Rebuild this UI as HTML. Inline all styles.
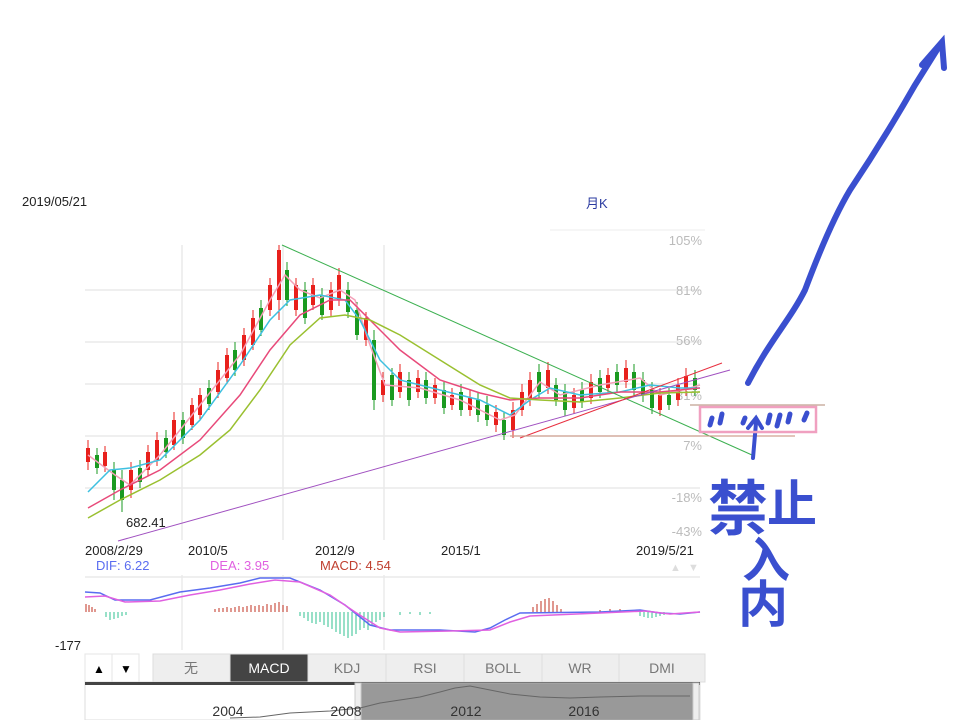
<!DOCTYPE html>
<html><head><meta charset="utf-8"><style>
body{margin:0;background:#fff;width:953px;height:720px;overflow:hidden;font-family:"Liberation Sans","Noto Sans CJK SC",sans-serif;}
svg{position:absolute;left:0;top:0}
</style></head><body>
<svg width="953" height="720" viewBox="0 0 953 720" xmlns="http://www.w3.org/2000/svg" font-family="Liberation Sans, Noto Sans CJK SC, sans-serif">
<text x="22" y="206" font-size="13" fill="#222">2019/05/21</text>
<text x="586" y="208" font-size="13" fill="#2a3aa0">月K</text>
<line x1="550" y1="230" x2="705" y2="230" stroke="#eee"/>
<g stroke="#eaeaea" stroke-width="1.5">
<line x1="85" y1="290" x2="700" y2="290"/><line x1="85" y1="342" x2="700" y2="342"/>
<line x1="85" y1="384" x2="700" y2="384"/><line x1="85" y1="436" x2="700" y2="436"/>
<line x1="85" y1="488" x2="700" y2="488"/>
<line x1="182" y1="245" x2="182" y2="540"/><line x1="283" y1="245" x2="283" y2="540"/><line x1="384" y1="245" x2="384" y2="540"/>
<line x1="182" y1="575" x2="182" y2="650"/><line x1="283" y1="575" x2="283" y2="650"/><line x1="384" y1="575" x2="384" y2="650"/>
<line x1="85" y1="577" x2="700" y2="577"/>
</g>
<g font-size="13" fill="#bbb" text-anchor="end">
<text x="702" y="245">105%</text><text x="702" y="295">81%</text><text x="702" y="345">56%</text>
<text x="702" y="400">31%</text><text x="702" y="450">7%</text><text x="702" y="502">-18%</text><text x="702" y="536">-43%</text>
</g>
<!-- wicks -->
<path stroke="#e8201c" fill="none" d="M88,440V470M105,446V472M131,462V498M148,445V476M157,432V466M174,412V450M192,398V430M200,388V420M218,362V398M227,348V384M244,328V366M253,310V350M270,278V316M279,245V320M296,278V316M313,278V310M331,282V316M339,268V306M366,312V346M383,372V402M400,364V398M418,370V398M435,378V404M452,388V410M470,390V416M496,405V432M513,402V438M522,384V416M530,372V406M548,362V394M574,388V414M591,374V404M608,368V394M626,360V388M660,388V416M678,378V406M686,368V396"/>
<path stroke="#1a9a20" fill="none" d="M97,448V474M114,462V500M122,470V512M140,460V488M166,430V458M183,412V444M209,380V410M235,342V376M261,300V336M287,262V306M305,282V324M322,288V320M348,282V318M357,302V340M374,330V410M392,368V406M409,372V406M426,372V404M444,382V414M461,384V416M478,392V422M487,396V426M504,412V440M539,364V398M556,378V406M565,384V416M582,382V408M600,370V398M617,364V392M634,364V396M643,372V402M652,382V414M669,388V410M695,370V396"/>
<g fill="#e8201c">
<rect x="86" y="448" width="4" height="14"/><rect x="103" y="452" width="4" height="14"/><rect x="129" y="470" width="4" height="20"/><rect x="146" y="452" width="4" height="18"/><rect x="155" y="440" width="4" height="20"/><rect x="172" y="420" width="4" height="25"/><rect x="190" y="405" width="4" height="20"/><rect x="198" y="395" width="4" height="20"/><rect x="216" y="370" width="4" height="22"/><rect x="225" y="355" width="4" height="23"/><rect x="242" y="335" width="4" height="25"/><rect x="251" y="318" width="4" height="27"/><rect x="268" y="285" width="4" height="25"/><rect x="277" y="250" width="4" height="50"/><rect x="294" y="285" width="4" height="25"/><rect x="311" y="285" width="4" height="20"/><rect x="329" y="290" width="4" height="20"/><rect x="337" y="275" width="4" height="25"/><rect x="364" y="318" width="4" height="22"/><rect x="381" y="380" width="4" height="15"/><rect x="398" y="372" width="4" height="20"/><rect x="416" y="378" width="4" height="14"/><rect x="433" y="385" width="4" height="13"/><rect x="450" y="395" width="4" height="10"/><rect x="468" y="398" width="4" height="12"/><rect x="494" y="412" width="4" height="13"/><rect x="511" y="410" width="4" height="20"/><rect x="520" y="392" width="4" height="18"/><rect x="528" y="380" width="4" height="20"/><rect x="546" y="370" width="4" height="18"/><rect x="572" y="395" width="4" height="13"/><rect x="589" y="382" width="4" height="16"/><rect x="606" y="375" width="4" height="13"/><rect x="624" y="368" width="4" height="14"/><rect x="658" y="395" width="4" height="15"/><rect x="676" y="385" width="4" height="15"/><rect x="684" y="376" width="4" height="14"/>
</g>
<g fill="#1a9a20">
<rect x="95" y="455" width="4" height="13"/><rect x="112" y="470" width="4" height="20"/><rect x="120" y="480" width="4" height="20"/><rect x="138" y="468" width="4" height="14"/><rect x="164" y="438" width="4" height="14"/><rect x="181" y="420" width="4" height="18"/><rect x="207" y="388" width="4" height="16"/><rect x="233" y="350" width="4" height="20"/><rect x="259" y="308" width="4" height="22"/><rect x="285" y="270" width="4" height="30"/><rect x="303" y="290" width="4" height="28"/><rect x="320" y="295" width="4" height="20"/><rect x="346" y="290" width="4" height="22"/><rect x="355" y="310" width="4" height="25"/><rect x="372" y="340" width="4" height="60"/><rect x="390" y="375" width="4" height="25"/><rect x="407" y="380" width="4" height="20"/><rect x="424" y="380" width="4" height="18"/><rect x="442" y="390" width="4" height="18"/><rect x="459" y="392" width="4" height="18"/><rect x="476" y="400" width="4" height="15"/><rect x="485" y="405" width="4" height="15"/><rect x="502" y="420" width="4" height="15"/><rect x="537" y="372" width="4" height="20"/><rect x="554" y="385" width="4" height="15"/><rect x="563" y="392" width="4" height="18"/><rect x="580" y="390" width="4" height="12"/><rect x="598" y="378" width="4" height="14"/><rect x="615" y="372" width="4" height="13"/><rect x="632" y="372" width="4" height="18"/><rect x="641" y="380" width="4" height="15"/><rect x="650" y="390" width="4" height="18"/><rect x="667" y="395" width="4" height="10"/><rect x="693" y="378" width="4" height="12"/>
</g>
<g fill="none" stroke-width="1.5">
<polyline stroke="#f4a0b8" points="88,455 115,475 130,485 160,455 200,405 240,355 270,300 285,275 300,290 320,298 340,290 355,300 370,345 385,385 420,388 460,400 500,420 515,415 540,382 560,395 600,385 640,378 660,395 690,388 700,385"/>
<polyline stroke="#3ec0e0" points="88,492 110,470 130,468 160,460 200,420 240,365 270,320 290,300 320,295 345,300 360,320 380,360 400,380 440,390 480,400 510,415 530,400 550,388 580,395 620,392 650,385 680,388 700,388"/>
<polyline stroke="#e84a7a" points="88,508 120,490 160,470 200,440 240,395 270,350 300,315 330,300 350,300 370,320 400,350 440,380 480,393 510,400 540,398 580,398 620,392 660,392 700,388"/>
<polyline stroke="#9ac030" points="88,518 120,500 160,480 200,455 230,430 260,390 290,345 320,318 345,315 370,320 400,335 440,360 480,385 510,398 540,400 580,402 620,398 660,393 700,392"/>
</g>
<line x1="282" y1="245" x2="752" y2="455" stroke="#3cb050" stroke-width="1"/>
<line x1="118" y1="541" x2="730" y2="370" stroke="#a050c0" stroke-width="1"/>
<line x1="520" y1="438" x2="722" y2="363" stroke="#e83040" stroke-width="1"/>
<line x1="510" y1="436" x2="795" y2="436" stroke="#d0a090" stroke-width="1.2"/>
<line x1="690" y1="405" x2="825" y2="405" stroke="#c0a090" stroke-width="1.2"/>
<text x="126" y="527" font-size="13" fill="#222">682.41</text>
<g font-size="13" fill="#222">
<text x="85" y="555">2008/2/29</text><text x="188" y="555">2010/5</text><text x="315" y="555">2012/9</text>
<text x="441" y="555">2015/1</text><text x="636" y="555">2019/5/21</text>
</g>
<g font-size="13"><text x="96" y="570" fill="#5a6cf0">DIF: 6.22</text><text x="210" y="570" fill="#e060e0">DEA: 3.95</text><text x="320" y="570" fill="#c04030">MACD: 4.54</text></g>
<text x="670" y="571" font-size="11" fill="#ddd">▲</text><text x="688" y="571" font-size="11" fill="#ddd">▼</text>
<path stroke="#c03020" fill="none" d="M86,612v-8M89,612v-7M92,612v-5M95,612v-3M215,612v-3M219,612v-4M223,612v-4M227,612v-5M231,612v-4M235,612v-5M239,612v-6M243,612v-5M247,612v-6M251,612v-7M255,612v-6M259,612v-7M263,612v-6M267,612v-8M271,612v-7M275,612v-9M279,612v-10M283,612v-7M287,612v-6M533,612v-5M537,612v-8M541,612v-11M545,612v-13M549,612v-14M553,612v-11M557,612v-7M561,612v-3M600,612v-2M610,612v-3M620,612v-3"/>
<path stroke="#30c090" fill="none" d="M106,612v5M110,612v8M114,612v7M118,612v6M122,612v4M126,612v3M300,612v4M304,612v6M308,612v9M312,612v11M316,612v12M320,612v10M324,612v13M328,612v15M332,612v17M336,612v20M340,612v22M344,612v24M348,612v26M352,612v24M356,612v22M360,612v18M364,612v16M368,612v18M372,612v14M376,612v10M380,612v8M384,612v5M400,612v3M410,612v2M420,612v3M430,612v2M640,612v4M644,612v5M648,612v6M652,612v6M656,612v5M660,612v4M664,612v3"/>
<g fill="none" stroke-width="1.5">
<polyline stroke="#5a6cf0" points="85,592 100,593 115,600 150,600 180,592 210,588 240,583 260,578 290,578 320,590 345,605 370,625 390,630 440,630 475,632 490,628 505,620 520,613 600,612 640,610 660,613 680,614 700,612"/>
<polyline stroke="#e060e0" points="85,597 105,596 125,602 160,601 190,595 220,590 250,584 275,580 300,582 330,595 355,612 380,628 400,632 450,631 490,630 510,622 530,616 600,613 645,611 670,614 700,612"/>
</g>
<text x="55" y="650" font-size="13" fill="#222">-177</text>
<rect x="85" y="654" width="27" height="28" fill="#fff" stroke="#e5e5e5"/>
<rect x="112" y="654" width="27" height="28" fill="#fff" stroke="#e5e5e5"/>
<text x="93" y="673" font-size="12" fill="#000">▲</text><text x="120" y="673" font-size="12" fill="#000">▼</text>
<g stroke="#ddd">
<rect x="153" y="654" width="77" height="28" fill="#eee"/><rect x="230" y="654" width="78" height="28" fill="#444"/>
<rect x="308" y="654" width="78" height="28" fill="#eee"/><rect x="386" y="654" width="78" height="28" fill="#eee"/>
<rect x="464" y="654" width="78" height="28" fill="#eee"/><rect x="542" y="654" width="77" height="28" fill="#eee"/>
<rect x="619" y="654" width="86" height="28" fill="#eee"/>
</g>
<g font-size="14" text-anchor="middle" fill="#777">
<text x="191" y="673">无</text><text x="269" y="673" fill="#fff">MACD</text><text x="347" y="673">KDJ</text>
<text x="425" y="673">RSI</text><text x="503" y="673">BOLL</text><text x="580" y="673">WR</text><text x="662" y="673">DMI</text>
</g>
<rect x="85" y="682" width="615" height="38" fill="#fff" stroke="#ddd"/>
<rect x="85" y="682" width="615" height="3" fill="#444"/>
<rect x="360" y="683" width="333" height="37" fill="#999" stroke="#aaa"/>
<rect x="355" y="683" width="6" height="37" fill="#eee" stroke="#ccc"/><rect x="693" y="683" width="6" height="37" fill="#eee" stroke="#ccc"/>
<polyline points="230,718 260,717 290,713 330,711 360,708 380,703 400,700 420,697 440,692 455,688 470,686 490,690 510,694 540,697 570,698 600,697 640,696 690,696" fill="none" stroke="#666"/>
<g font-size="14" fill="#333" text-anchor="middle"><text x="228" y="716">2004</text><text x="346" y="716">2008</text><text x="466" y="716">2012</text><text x="584" y="716">2016</text></g>
<g stroke="#3a4fcf" stroke-linecap="round" fill="none">
<path d="M748,383 C770,340 790,320 805,290 C820,250 835,215 850,190 C870,160 895,120 915,85 L940,45" stroke-width="6"/>
<path d="M922,65 L942,42 L944,68" stroke-width="6"/>
<path d="M756,423 L753,458" stroke-width="4"/><path d="M748,428 L756,418 L762,428" stroke-width="4"/>
<g stroke-width="5"><path d="M712,418 L710,425"/><path d="M722,414 L720,423"/><path d="M745,418 L743,423"/><path d="M770,415 L768,423"/><path d="M780,415 L777,426"/><path d="M790,414 L788,422"/><path d="M807,413 L804,420"/></g>
</g>
<rect x="700" y="407" width="116" height="25" fill="none" stroke="#f0a0c0" stroke-width="2.5"/>
<g fill="#3a4fcf" font-weight="bold">
<text x="708" y="530" font-size="60">禁</text><text x="767" y="522" font-size="50">止</text>
<text x="742" y="577" font-size="48">入</text><text x="738" y="622" font-size="50">内</text>
</g>
</svg>
</body></html>
